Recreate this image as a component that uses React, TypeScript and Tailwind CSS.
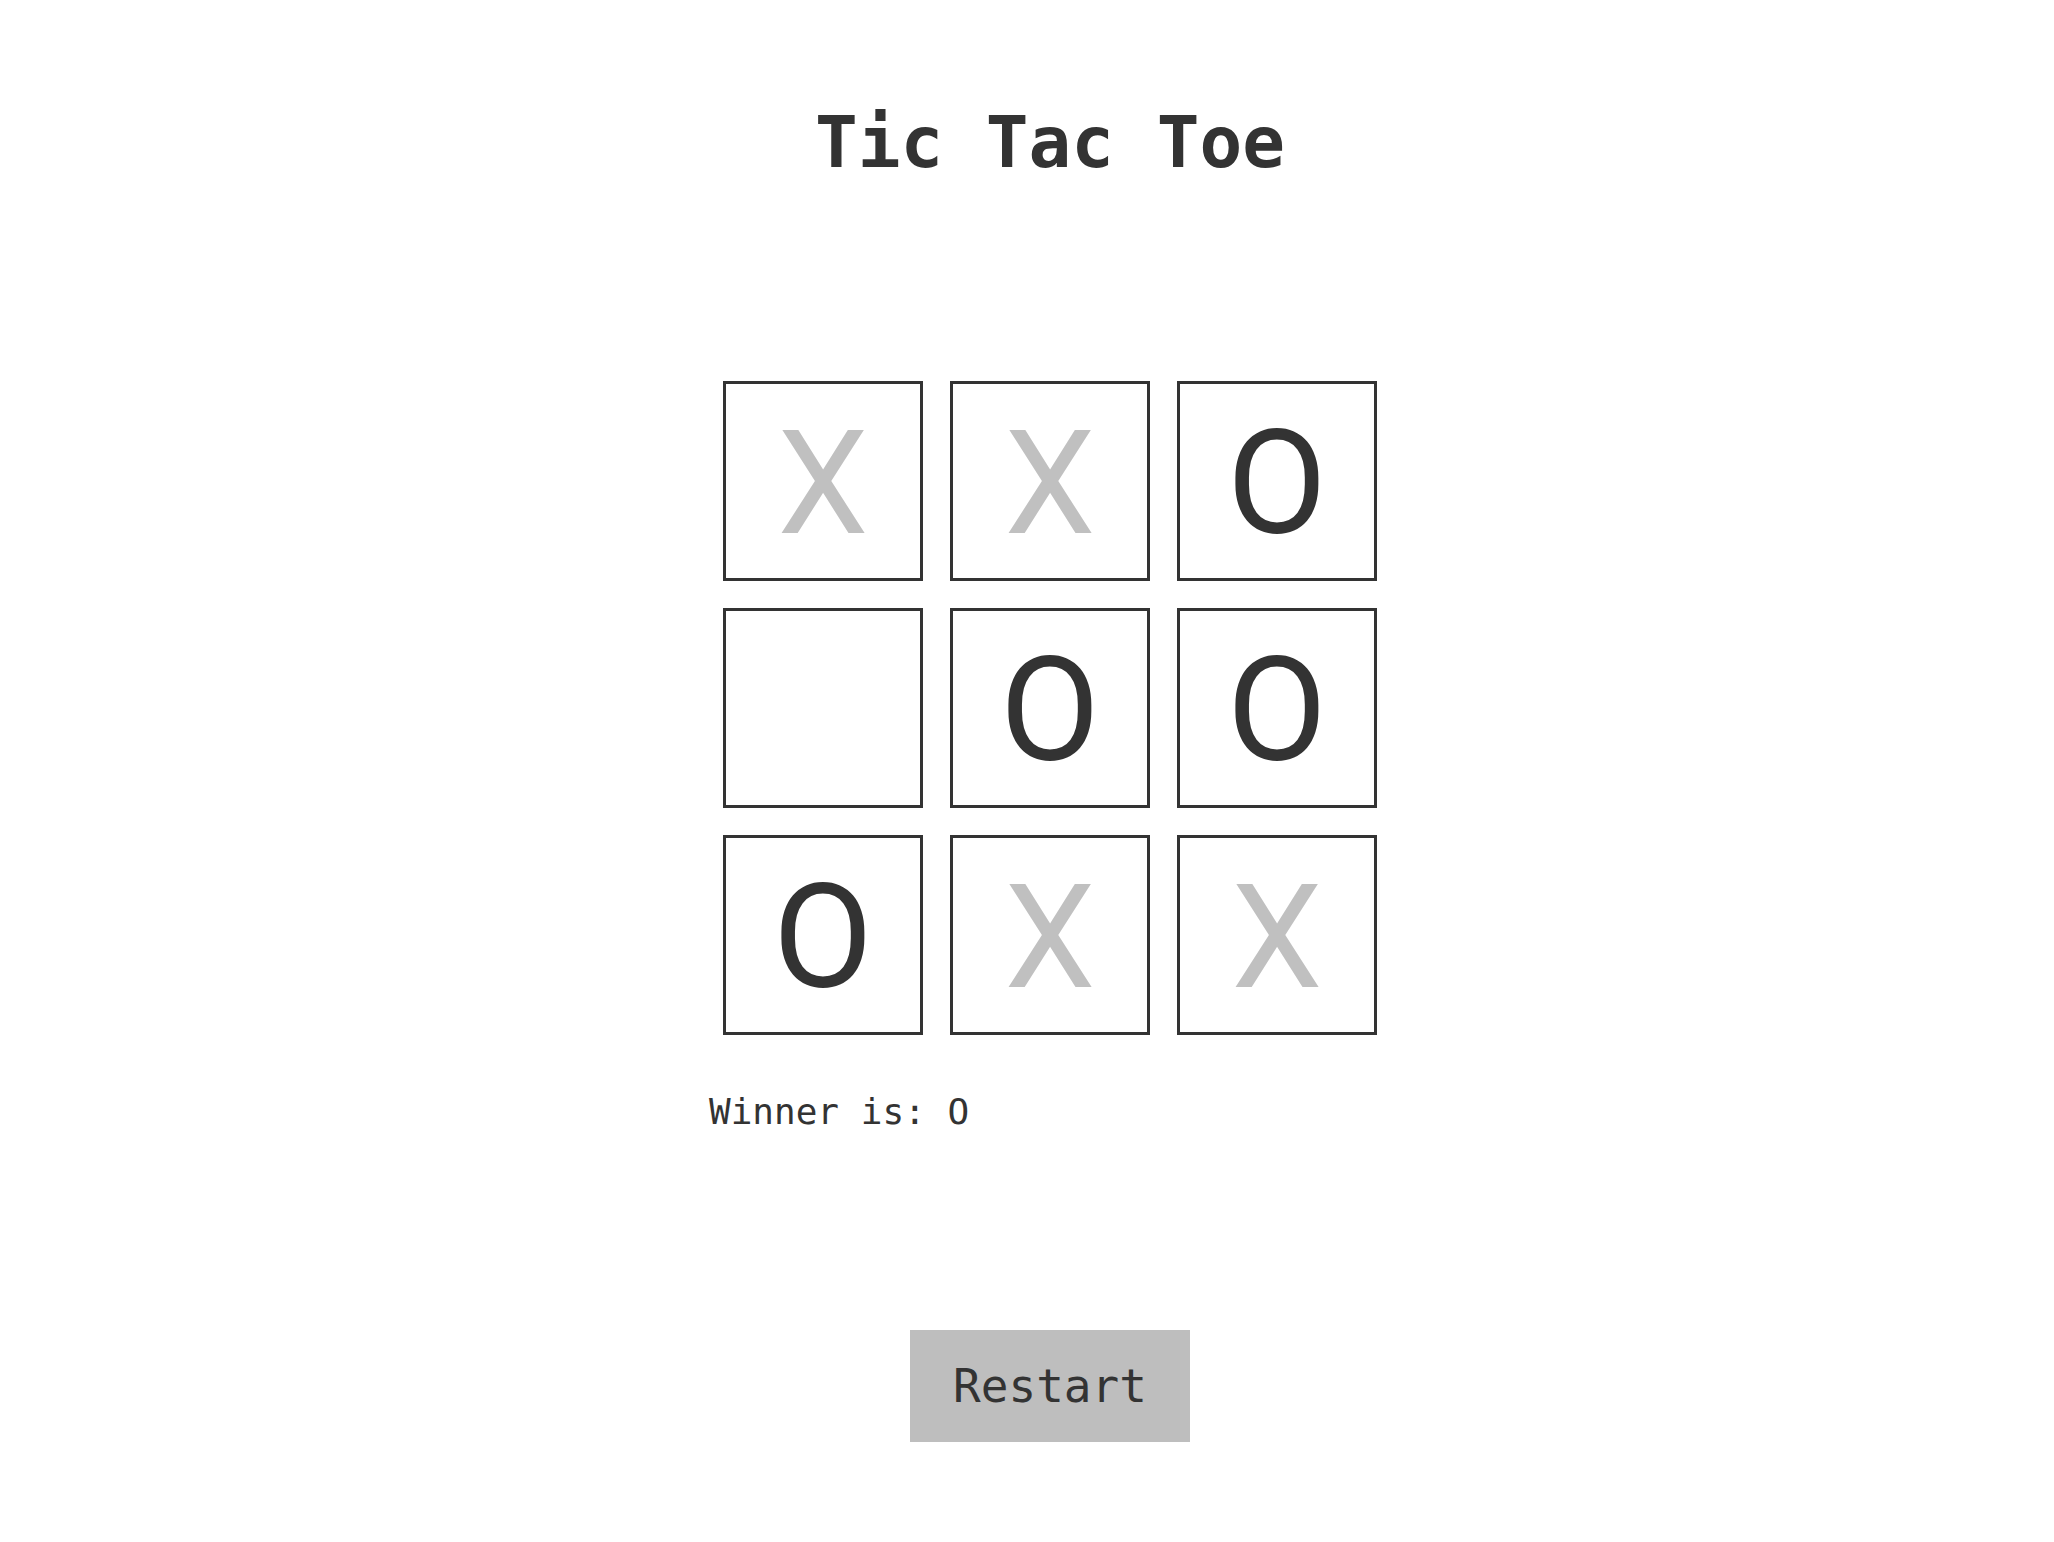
import React, { useState } from "react";

type Cell = "X" | "O" | null;

const initial: Cell[] = ["X", "X", "O", null, "O", "O", "O", "X", "X"];

export default function App() {
  const [board, setBoard] = useState<Cell[]>(initial);

  return (
    <div className="flex min-h-screen flex-col items-center bg-white pl-[46px] pt-[102px] text-[#333]">
      <h1 className="font-['DejaVu_Sans_Mono',monospace] text-[71px] font-bold leading-[82px]">
        Tic Tac Toe
      </h1>

      <div className="mt-[197px] w-[682px]">
        <div className="mx-auto grid w-[654px] grid-cols-3 gap-[27px]">
          {board.map((cell, i) => (
            <button
              key={i}
              onClick={() => {
                if (cell) return;
                const next = [...board];
                next[i] = "X";
                setBoard(next);
              }}
              className={
                "flex h-[200px] w-[200px] items-center justify-center border-[3px] border-[#333] bg-white pt-[4px] font-['Roboto',sans-serif] text-[145px] leading-none " +
                (cell === "X" ? "text-[#c0c0c0]" : "text-[#333]")
              }
            >
              {cell}
            </button>
          ))}
        </div>
        <p className="mt-[56px] font-['DejaVu_Sans_Mono',monospace] text-[36px] leading-[42px] text-[#333]">
          Winner is: O
        </p>
      </div>

      <button
        onClick={() => setBoard(Array(9).fill(null))}
        className="mt-[197px] flex h-[112px] w-[280px] items-center justify-center bg-[#bebebe] font-['DejaVu_Sans_Mono',monospace] text-[46px] text-[#333]"
      >
        Restart
      </button>
    </div>
  );
}
